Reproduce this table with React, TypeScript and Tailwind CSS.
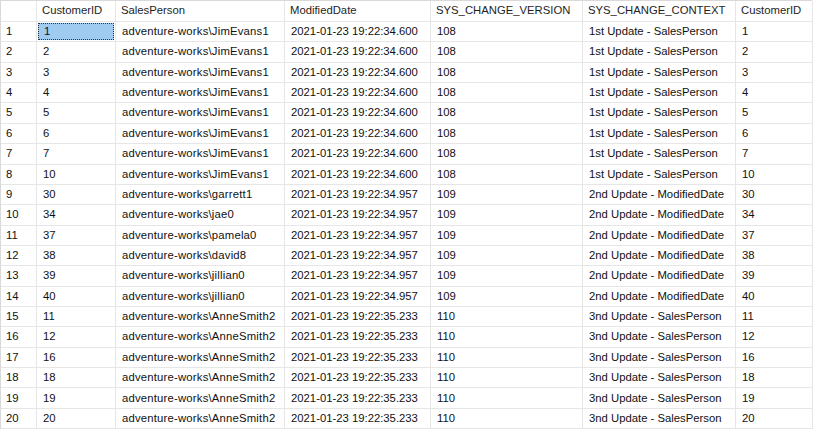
import React from "react";

type Row = {
  id: number;
  person: string;
  modified: string;
  version: number;
  context: string;
};

const jim = "adventure-works\\JimEvans1";
const anne = "adventure-works\\AnneSmith2";

const rows: Row[] = [
  ...[1, 2, 3, 4, 5, 6, 7, 10].map((id) => ({
    id,
    person: jim,
    modified: "2021-01-23 19:22:34.600",
    version: 108,
    context: "1st Update - SalesPerson",
  })),
  ...[
    [30, "garrett1"],
    [34, "jae0"],
    [37, "pamela0"],
    [38, "david8"],
    [39, "jillian0"],
    [40, "jillian0"],
  ].map(([id, who]) => ({
    id: id as number,
    person: "adventure-works\\" + who,
    modified: "2021-01-23 19:22:34.957",
    version: 109,
    context: "2nd Update - ModifiedDate",
  })),
  ...[11, 12, 16, 18, 19, 20].map((id) => ({
    id,
    person: anne,
    modified: "2021-01-23 19:22:35.233",
    version: 110,
    context: "3nd Update - SalesPerson",
  })),
];

const headers = [
  "",
  "CustomerID",
  "SalesPerson",
  "ModifiedDate",
  "SYS_CHANGE_VERSION",
  "SYS_CHANGE_CONTEXT",
  "CustomerID",
];

const cols = "grid grid-cols-[36px_79px_169px_146px_152px_153px_77px]";
const base =
  "h-[20.37px] flex items-center border-r border-b border-[#e6e6e6] whitespace-nowrap overflow-hidden";
const cell = base + " pl-[6px]";

export default function App() {
  return (
    <div
      className="w-[816px] h-[433px] bg-white text-[#111] text-[11.3px] leading-none"
      style={{ fontFamily: '"Liberation Sans", Arial, sans-serif' }}
    >
      <div className="w-[812px] border-l border-t border-[#d9d9d9]">
        {/* header */}
        <div className={cols}>
          {headers.map((h, i) => (
            <div
              key={i}
              className="h-[21px] flex items-center border-r border-b border-[#e6e6e6] pl-[5px] text-[#1e1e1e] whitespace-nowrap"
            >
              {h}
            </div>
          ))}
        </div>
        {/* rows */}
        {rows.map((r, i) => (
          <div key={i} className={cols}>
            <div className={base + " pl-[5px]"}>{i + 1}</div>
            {i === 0 ? (
              <div className={base + " py-[1px] pr-[1px]"}>
                <div className="h-full w-full ml-[1px] flex items-center pl-[5px] bg-[#9fcbf0] border border-dotted border-[#333]">
                  {r.id}
                </div>
              </div>
            ) : (
              <div className={cell}>{r.id}</div>
            )}
            <div className={cell + " tracking-[0.2px]"}>{r.person}</div>
            <div className={cell}>{r.modified}</div>
            <div className={cell}>{r.version}</div>
            <div className={cell}>{r.context}</div>
            <div className={cell}>{r.id}</div>
          </div>
        ))}
      </div>
    </div>
  );
}
